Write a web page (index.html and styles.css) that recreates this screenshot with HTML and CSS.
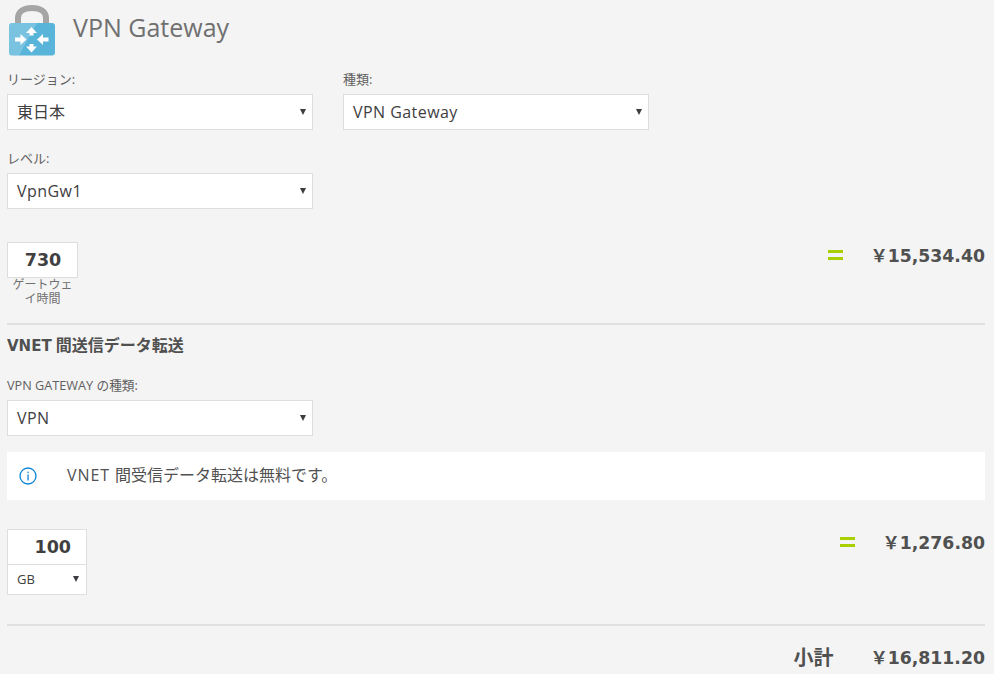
FILE: index.html
```html
<!DOCTYPE html>
<html lang="ja">
<head>
<meta charset="utf-8">
<title>VPN Gateway</title>
<link rel="stylesheet" href="styles.css">
</head>
<body>
<main class="page">
  <header class="title-row">
    <svg class="logo" width="56" height="56" viewBox="0 0 56 56" aria-hidden="true">
      <path d="M18 26V18C18 11.500 24 8 32 8S46 11.500 46 18V26" fill="none" stroke="#a5a5a5" stroke-width="6"/>
      <rect x="9" y="23" width="46" height="32.500" rx="3" fill="#59b4d9"/>
      <path d="M12 23H37L19 55.500H12C10 55.500 9 54.500 9 52.500V26C9 24 10 23 12 23Z" fill="#fff" opacity=".2"/>
      <path d="M31.500 27l5.500 6h-3.500v2.500h-4v-2.500h-3.500zM31.500 52.500l5.500-6h-3.500v-2.500h-4v2.500h-3.500zM15 37.500h5.500v-3.500l6 5.500-6 5.500v-3.500h-5.500zM48.500 37.500h-5.500v-3.500l-6 5.500 6 5.500v-3.500h5.500z" fill="#fff"/>
    </svg>
    <h1 class="title">VPN Gateway</h1>
  </header>

  <section class="fields">
    <div class="field">
      <div class="label">リージョン:</div>
      <div class="select"><span class="cjk">東日本</span><i class="arrow"></i></div>
    </div>
    <div class="field">
      <div class="label">種類:</div>
      <div class="select"><span class="latin">VPN Gateway</span><i class="arrow"></i></div>
    </div>
    <div class="field">
      <div class="label">レベル:</div>
      <div class="select"><span class="latin">VpnGw1</span><i class="arrow"></i></div>
    </div>
  </section>

  <section class="calc calc-hours">
    <div class="qty">
      <div class="qty-input">730</div>
      <div class="qty-caption">ゲートウェイ時間</div>
    </div>
    <div class="result"><i class="equals"></i><span class="price">￥15,534.40</span></div>
  </section>

  <hr class="rule">

  <h2 class="section-title"><span class="section-latin">VNET</span> 間送信データ転送</h2>

  <div class="field field-single">
    <div class="label label-small">VPN GATEWAY の種類:</div>
    <div class="select"><span class="latin">VPN</span><i class="arrow"></i></div>
  </div>

  <div class="notice">
    <svg class="info" width="18" height="18" viewBox="0 0 18 18" aria-hidden="true">
      <circle cx="9" cy="9" r="8" fill="none" stroke="#0f85d6" stroke-width="1.300"/>
      <rect x="8.400" y="7.500" width="1.300" height="6" fill="#0f85d6"/>
      <rect x="8.400" y="4.600" width="1.300" height="1.500" fill="#0f85d6"/>
    </svg>
    <span class="notice-text"><span class="notice-latin">VNET </span>間受信データ転送は無料です。</span>
  </div>

  <section class="calc calc-data">
    <div class="unit-box">
      <div class="unit-input">100</div>
      <div class="unit-select"><span>GB</span><i class="arrow"></i></div>
    </div>
    <div class="result"><i class="equals"></i><span class="price">￥1,276.80</span></div>
  </section>

  <hr class="rule">

  <div class="subtotal"><span class="subtotal-label">小計</span><span class="price">￥16,811.20</span></div>
</main>
</body>
</html>
```
FILE: styles.css
```css
* { box-sizing: border-box; }
html, body { margin: 0; height: 674px; overflow: hidden; }
body {
  background: #f4f4f4;
  color: #505050;
  font-family: "Open Sans", "Noto Sans CJK JP", sans-serif;
}
.page { padding: 0 9px 0 7px; }
.title-row { display: flex; align-items: flex-start; height: 71px; }
.logo { margin-left: -7px; flex: none; }
.title {
  margin: 11px 0 0 17px;
  font-size: 25px;
  line-height: 32px;
  font-weight: 400;
  color: #707070;
}
.fields {
  display: grid;
  grid-template-columns: 306px 306px;
  column-gap: 30px;
  row-gap: 20px;
}
.field-single { width: 306px; margin-top: 20px; }
.label { font-size: 13px; line-height: 16px; height: 23px; color: #606060; }
.label-small { font-size: 12.700px; }
.select {
  height: 36px;
  width: 100%;
  background: #fff;
  border: 1px solid #dedede;
  display: flex;
  align-items: center;
  justify-content: space-between;
  padding: 0 6px 0 9px;
  font-size: 16px;
  color: #404040;
}
.latin { letter-spacing: .45px; }
.cjk { margin-top: -2px; }
.arrow {
  width: 0;
  height: 0;
  border-left: 3px solid transparent;
  border-right: 3px solid transparent;
  border-top: 6px solid #3c3c41;
}
.calc { display: flex; justify-content: space-between; align-items: flex-start; }
.calc-hours { margin-top: 33px; height: 81px; }
.qty { width: 71px; }
.qty-input, .unit-input {
  font-family: "DejaVu Sans", sans-serif;
  font-weight: 700;
  font-size: 17.500px;
  color: #404040;
  background: #fff;
  display: flex;
  align-items: center;
}
.qty-input {
  height: 36px;
  border: 1px solid #dedede;
  justify-content: center;
  padding-left: 1px;
}
.qty-caption {
  font-size: 12px;
  line-height: 14px;
  text-align: center;
  color: #707070;
  padding: 0 4px;
}
.result { display: flex; align-items: center; }
.calc-hours .result { margin-top: 2px; }
.calc-data .result { margin-top: 2px; }
.equals {
  width: 15px;
  height: 10px;
  border-top: 3px solid #a8d000;
  border-bottom: 3px solid #a8d000;
  margin: -2px 27px 0 0;
}
.price {
  font-family: "DejaVu Sans", "Noto Sans CJK JP", sans-serif;
  font-weight: 700;
  font-size: 17.300px;
  line-height: 24px;
  color: #505050;
  white-space: nowrap;
}
.rule { margin: 0; border: 0; height: 2px; background: #e0e0e0; }
.section-title {
  margin: 9px 0 0;
  font-size: 16px;
  line-height: 22px;
  font-weight: 700;
  color: #505050;
}
.section-latin { font-family: "DejaVu Sans", sans-serif; font-size: 15px; }
.notice {
  margin-top: 16px;
  height: 48px;
  background: #fff;
  display: flex;
  align-items: center;
  padding-left: 12px;
  font-size: 16px;
  color: #505050;
}
.notice-text { margin-top: -4px; }
.notice-latin { letter-spacing: .9px; }
.info { flex: none; margin-right: 30px; }
.calc-data { margin-top: 29px; height: 95px; }
.unit-box { width: 80px; border: 1px solid #dedede; background: #fff; height: 66px; }
.unit-input { height: 35px; justify-content: flex-end; padding-right: 15px; border-bottom: 1px solid #dedede; }
.unit-select {
  height: 29px;
  display: flex;
  align-items: center;
  justify-content: space-between;
  padding: 0 7px 2px 9px;
  font-size: 13px;
  color: #404040;
}
.subtotal {
  display: flex;
  justify-content: flex-end;
  align-items: center;
  margin-top: 20px;
}
.subtotal-label {
  font-size: 20px;
  font-weight: 700;
  margin-right: 37px;
  line-height: 24px;
}
```
